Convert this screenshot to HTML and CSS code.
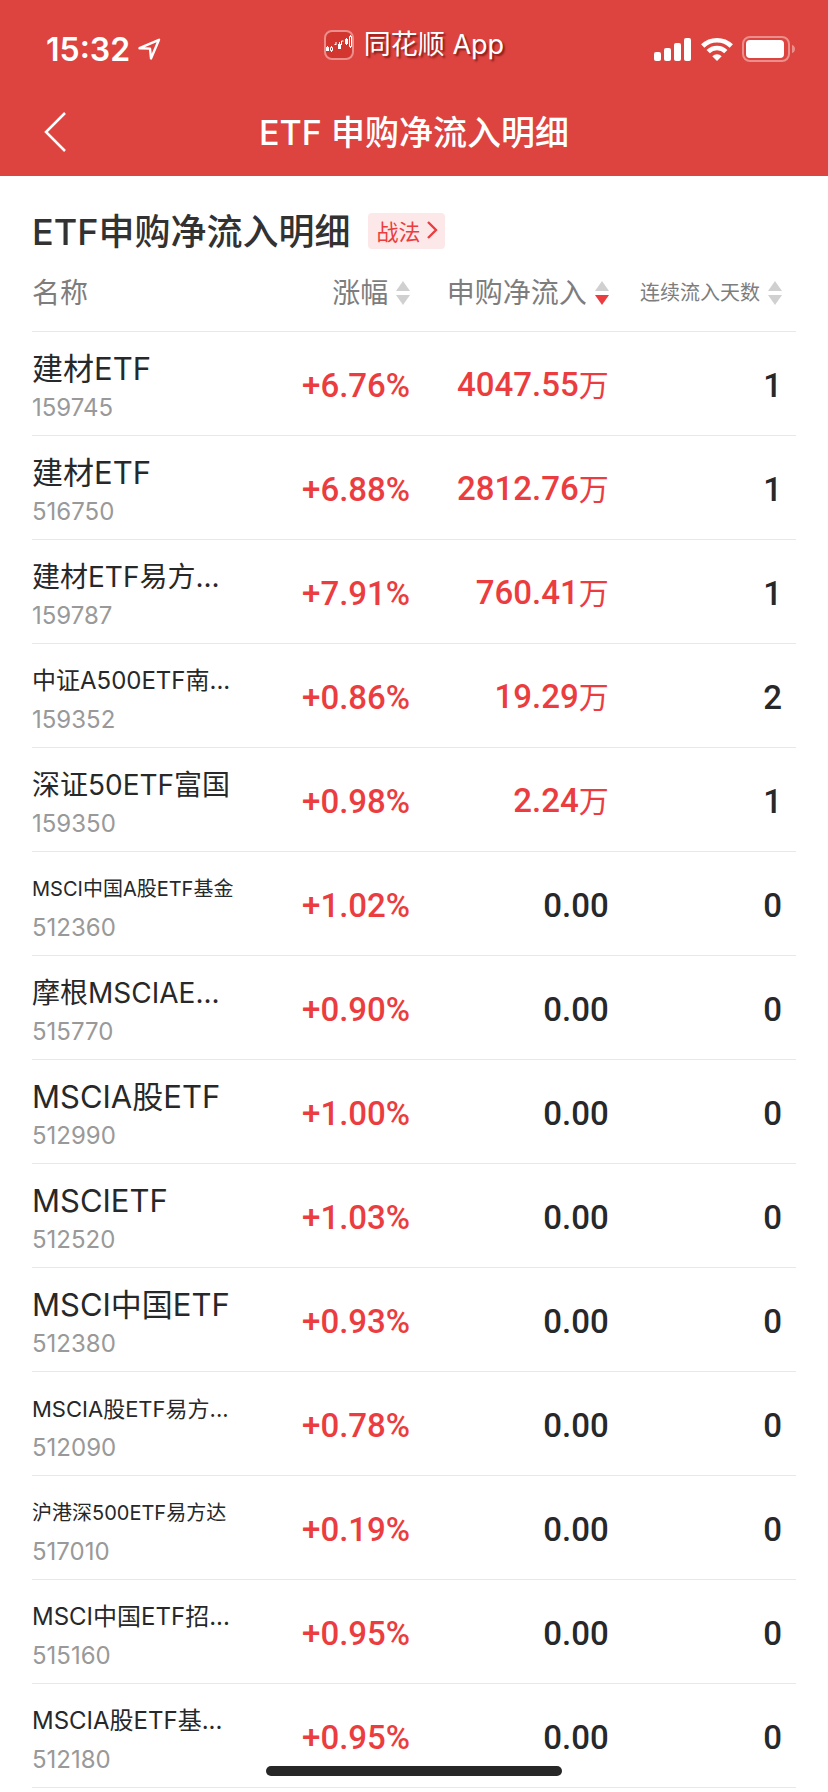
FILE: index.html
```
<!DOCTYPE html>
<html lang="zh-CN">
    <head>
        <meta charset="UTF-8" />
        <meta name="viewport" content="width=device-width, initial-scale=1.0" />
        <title>ETF申购净流入明细</title>
        <link rel="stylesheet" href="styles.css">
    </head>

    <body>
        <header class="header">
            <div class="status">
                <div class="time">
                    <span>15:32</span>
                    <svg width="24" height="24" viewBox="0 0 24 24" fill="none" stroke="#fff" stroke-width="2.4" stroke-linejoin="round">
                        <path d="M1.500 11.200L21 2.800L13 21.500L12 11.600Z" />
                    </svg>
                </div>
                <div class="app">
                    <svg width="30" height="30" viewBox="0 0 30 30">
                        <rect x="1" y="1" width="28" height="28" rx="7" fill="#d3352f" stroke="#ea8f8b" stroke-width="2" />
                        <path d="M2 17h3v4H2zM14 14h3v5h-3zM21 9h3v5h-3z" fill="#fff" />
                        <path d="M3.500 16v5M7.500 16v6M15.500 12v7M22.500 8v7M26.500 5v13" stroke="#fff" />
                        <path d="M6.500 17.500h2v3h-2zM25.500 6.500h2v10h-2z" fill="#d3352f" stroke="#fff" />
                        <path d="M10.500 14.500h1.500M12 12v3M17.500 15v-4h2" fill="none" stroke="#fff" />
                    </svg>
                    <span class="app-name">同花顺 App</span>
                </div>
                <div class="signal">
                    <svg width="38" height="24" viewBox="0 0 38 24" fill="#fff">
                        <rect x="0" y="15" width="7" height="9" rx="2" />
                        <rect x="10" y="11" width="7" height="13" rx="2" />
                        <rect x="20" y="6" width="7" height="18" rx="2" />
                        <rect x="30" y="1" width="7" height="23" rx="2" />
                    </svg>
                    <svg width="32" height="24" viewBox="0 0 32 24" fill="none" stroke="#fff" stroke-width="4.600">
                        <path d="M1.700 9A20.500 20.500 0 0 1 30.300 9" />
                        <path d="M7.200 14.600A12.500 12.500 0 0 1 24.800 14.600" />
                        <path d="M11.300 19.200A6.800 6.800 0 0 1 20.700 19.200L16 24Z" fill="#fff" stroke="none" />
                    </svg>
                    <svg width="54" height="26" viewBox="0 0 54 26">
                        <rect x="1" y="1" width="46" height="24" rx="7" fill="none" stroke="#ea8f8b" stroke-width="2" />
                        <rect x="4" y="4" width="38" height="18" rx="4" fill="#fff" />
                        <path d="M50 9c4 1 4 7 0 8z" fill="#ea8f8b" />
                    </svg>
                </div>
            </div>
            <nav class="nav">
                <button class="back" type="button" aria-label="返回">
                    <svg width="22" height="40" viewBox="0 0 22 40" fill="none" stroke="#fff" stroke-width="2.500">
                        <path d="M21 1L2 20L21 39" />
                    </svg>
                </button>
                <h1 class="nav-title">ETF 申购净流入明细</h1>
            </nav>
        </header>

        <main class="main">
            <div class="title-wrap">
                <h2 class="title">ETF申购净流入明细</h2>
                <a class="tip" href="#">战法
                    <svg width="12" height="18" viewBox="0 0 12 18" fill="none" stroke="#eb3d40" stroke-width="2.400">
                        <path d="M2 1L10 9L2 17" />
                    </svg>
                </a>
            </div>
            <table class="list">
                <thead>
                    <tr>
                        <th class="name" scope="col">名称</th>
                        <th class="rate" scope="col"><button class="sort" type="button">涨幅<i class="arrow"></i></button></th>
                        <th class="inflow" scope="col" aria-sort="descending"><button class="sort desc" type="button">申购净流入<i class="arrow"></i></button></th>
                        <th class="days" scope="col"><button class="sort small" type="button">连续流入天数<i class="arrow"></i></button></th>
                    </tr>
                </thead>
                <tbody id="etfList">
                    <!-- <tr>
                        <td><div class="etf a">建材ETF</div><div class="code">159745</div></td>
                        <td class="up">+6.76%</td>
                        <td class="up">4047.55万</td>
                        <td>1</td>
                    </tr> -->
                </tbody>
            </table>
        </main>
        <div class="home-bar"></div>

        <script>
            // 名称, 代码, 涨幅, 净流入, 天数, 字号
            var data = [
                ["建材ETF", "159745", "+6.76%", "4047.55万", 1, "a"],
                ["建材ETF", "516750", "+6.88%", "2812.76万", 1, "a"],
                ["建材ETF易方...", "159787", "+7.91%", "760.41万", 1, "b"],
                ["中证A500ETF南...", "159352", "+0.86%", "19.29万", 2, "c"],
                ["深证50ETF富国", "159350", "+0.98%", "2.24万", 1, "b"],
                ["MSCI中国A股ETF基金", "512360", "+1.02%", "0.00", 0, "e"],
                ["摩根MSCIAE...", "515770", "+0.90%", "0.00", 0, "b"],
                ["MSCIA股ETF", "512990", "+1.00%", "0.00", 0, "a"],
                ["MSCIETF", "512520", "+1.03%", "0.00", 0, "a"],
                ["MSCI中国ETF", "512380", "+0.93%", "0.00", 0, "a"],
                ["MSCIA股ETF易方...", "512090", "+0.78%", "0.00", 0, "d"],
                ["沪港深500ETF易方达", "517010", "+0.19%", "0.00", 0, "e"],
                ["MSCI中国ETF招...", "515160", "+0.95%", "0.00", 0, "c"],
                ["MSCIA股ETF基...", "512180", "+0.95%", "0.00", 0, "c"]
            ];

            data.forEach(item => {
                var tr = document.createElement('tr');
                var inflow = item[3].replace('万', '<span class="unit">万</span>');

                tr.innerHTML = `<td><div class="etf ${item[5]}">${item[0]}</div>
                    <div class="code">${item[1]}</div></td>
                    <td class="up">${item[2]}</td>
                    <td class="${item[4] > 0 ? 'up' : ''}">${inflow}</td>
                    <td class="days">${item[4]}</td>`;

                document.getElementById('etfList').appendChild(tr);
            });
        </script>
    </body>
</html>
```
FILE: styles.css
```
* {
    margin: 0;
    padding: 0;
    box-sizing: border-box;
}

body {
    font-family: "Inter", "Noto Sans CJK SC", sans-serif;
    background: #fff;
    color: #272829;
}

button {
    border: 0;
    background: none;
    color: inherit;
    font: inherit;
}

svg {
    display: block;
    flex: none;
}

.header {
    background: #dd443f;
    color: #fff;
}

.status {
    display: grid;
    grid-template-columns: 1fr auto 1fr;
    align-items: center;
    height: 88px;
    padding: 10px 32px 0;
}

.time {
    display: flex;
    align-items: center;
    gap: 8px;
    padding-left: 14px;
    font-size: 32px;
    font-weight: 600;
}

.app {
    display: flex;
    align-items: center;
    gap: 10px;
    padding-bottom: 8px;
    font-size: 27px;
    text-shadow: 2px 2px 2px rgba(80, 0, 0, 0.6);
}

.app-name {
    line-height: 32px;
}

.signal {
    display: flex;
    align-items: center;
    justify-content: flex-end;
    gap: 9px;
}

.nav {
    display: grid;
    grid-template-columns: 1fr auto 1fr;
    align-items: center;
    height: 88px;
    padding: 0 44px;
}

.back {
    justify-self: start;
}

.nav-title {
    padding-bottom: 4px;
    font-size: 34px;
    font-weight: 500;
}

.main {
    padding: 0 32px;
}

.title-wrap {
    display: flex;
    align-items: center;
    gap: 18px;
    height: 105px;
    padding-top: 4px;
}

.title {
    padding-bottom: 4px;
    font-size: 36px;
    font-weight: 500;
    color: #323232;
}

.tip {
    display: flex;
    align-items: center;
    gap: 6px;
    height: 36px;
    padding: 0 7px 2px 8px;
    border-radius: 4px;
    background: #fce8e9;
    color: #eb3d40;
    font-size: 22px;
    text-decoration: none;
}

.list {
    width: 100%;
    table-layout: fixed;
    border-collapse: collapse;
    text-align: right;
}

.list th {
    padding-bottom: 26px;
    border-bottom: 1px solid #e8e8e8;
    color: #7d7d7d;
    font-size: 28px;
    font-weight: 400;
    line-height: 20px;
}

.list .name {
    width: 28%;
    text-align: left;
}

.list .rate {
    width: 21.5%;
}

.list .inflow {
    width: 26%;
}

.list .days {
    padding-right: 14px;
}

.sort {
    display: flex;
    align-items: center;
    gap: 8px;
    margin-left: auto;
    white-space: nowrap;
}

.sort.small {
    font-size: 20px;
}

/* 排序箭头 */
.arrow {
    display: flex;
    flex-direction: column;
    gap: 4px;
}

.arrow::before,
.arrow::after {
    content: "";
    border: 7px solid transparent;
}

.arrow::before {
    border-top: 0;
    border-bottom: 10px solid #d0d0d0;
}

.arrow::after {
    border-bottom: 0;
    border-top: 10px solid #d0d0d0;
}

.desc .arrow::after {
    border-top-color: #eb3d40;
}

.list td {
    height: 104px;
    padding-top: 4px;
    border-bottom: 1px solid #e8e8e8;
    font-family: "Roboto", "Noto Sans CJK SC", sans-serif;
    font-size: 33px;
    font-weight: 500;
    line-height: 40px;
    white-space: nowrap;
}

.list td:first-child {
    font-family: "Inter", "Noto Sans CJK SC", sans-serif;
    font-weight: 400;
    text-align: left;
}

.list .up {
    color: #eb3d40;
}

.unit {
    font-size: 30px;
    font-weight: 400;
}

.etf {
    line-height: 44px;
}

.etf.a {
    font-size: 31px;
}

.etf.b {
    font-size: 28px;
}

.etf.c {
    font-size: 24px;
}

.etf.d {
    font-size: 22px;
}

.etf.e {
    font-size: 20px;
}

.code {
    font-size: 24px;
    line-height: 34px;
    color: #999;
}

.home-bar {
    position: fixed;
    left: 50%;
    bottom: 16px;
    width: 296px;
    height: 10px;
    border-radius: 5px;
    background: #272727;
    transform: translateX(-50%);
}
```
